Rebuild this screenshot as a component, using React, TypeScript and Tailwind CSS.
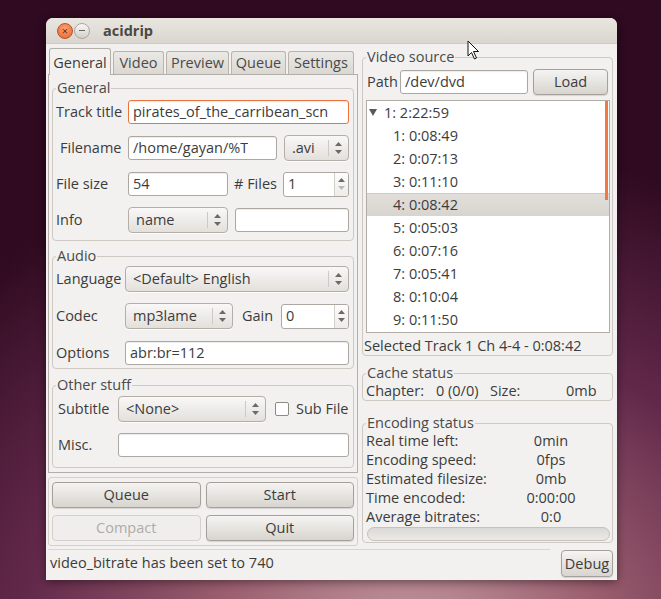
import React from "react";

function Arrows({ dim }: { dim?: boolean }) {
    return (
        <div className="flex flex-col items-center gap-[4px]">
            <svg width="7" height="4" viewBox="0 0 7 4"><path d="M0 4 L3.5 0 L7 4 Z" fill="#6d6a66" /></svg>
            <svg width="7" height="4" viewBox="0 0 7 4"><path d="M0 0 L3.5 4 L7 0 Z" fill={dim ? "#bdbab5" : "#6d6a66"} /></svg>
        </div>
    );
}

function Entry({ value, focused, className }: { value?: string; focused?: boolean; className?: string }) {
    return (
        <div
            className={`h-[24px] flex items-center pl-[4px] bg-white rounded-[3px] border shadow-[inset_0_1px_1px_rgba(0,0,0,0.08)] ${
                focused ? "border-[#e9743f]" : "border-[#aca8a1]"
            } ${className ?? ""}`}
        >
            <span className="whitespace-nowrap overflow-hidden">{value}</span>
        </div>
    );
}

function Combo({ value, className }: { value: string; className?: string }) {
    return (
        <div className={`h-[26px] flex items-center rounded-[4px] border border-[#b3afa8] bg-gradient-to-b from-[#f9f8f7] to-[#e3e0dc] shadow-[0_1px_0_rgba(255,255,255,0.8)] ${className ?? ""}`}>
            <span className="flex-1 pl-[7px] whitespace-nowrap overflow-hidden">{value}</span>
            <div className="w-px h-[16px] bg-[#cdc9c3]" />
            <div className="w-[19px] flex justify-center">
                <Arrows />
            </div>
        </div>
    );
}

function Spin({ value, dimDown, className }: { value: string; dimDown?: boolean; className?: string }) {
    return (
        <div className={`h-[25px] flex bg-white rounded-[3px] border border-[#aca8a1] overflow-hidden ${className ?? ""}`}>
            <span className="flex-1 flex items-center pl-[4px]">{value}</span>
            <div className="w-[14px] border-l border-[#d3d0cb] bg-gradient-to-b from-[#fdfdfc] to-[#eeece9] flex items-center justify-center">
                <Arrows dim={dimDown} />
            </div>
        </div>
    );
}

function Btn({ label, disabled, className }: { label: string; disabled?: boolean; className?: string }) {
    return (
        <div
            className={`h-[26px] flex items-center justify-center rounded-[4px] border ${
                disabled
                    ? "border-[#d4d1cc] bg-[#efeeec] text-[#aeaba7]"
                    : "border-[#a5a19a] bg-gradient-to-b from-[#f5f4f2] to-[#d8d5cf] shadow-[0_1px_1px_rgba(0,0,0,0.12)]"
            } ${className ?? ""}`}
        >
            {label}
        </div>
    );
}

function Frame({ title, className, children }: { title: string; className?: string; children: React.ReactNode }) {
    return (
        <fieldset className={`border border-[#cdc9c2] rounded-[4px] ${className ?? ""}`}>
            <legend className="ml-[3px] px-[1px] leading-[16px] text-[#4a4a4a]">{title}</legend>
            {children}
        </fieldset>
    );
}

const tabs = [
    { name: "General", w: "w-[62px]" },
    { name: "Video", w: "w-[51px]" },
    { name: "Preview", w: "w-[63px]" },
    { name: "Queue", w: "w-[55px]" },
    { name: "Settings", w: "w-[66px]" },
];

const chapters = ["0:08:49", "0:07:13", "0:11:10", "0:08:42", "0:05:03", "0:07:16", "0:05:41", "0:10:04", "0:11:50"];

const encoding = [
    ["Real time left:", "0min"],
    ["Encoding speed:", "0fps"],
    ["Estimated filesize:", "0mb"],
    ["Time encoded:", "0:00:00"],
    ["Average bitrates:", "0:0"],
];

export default function App() {
    return (
        <div className="relative w-[661px] h-[599px] overflow-hidden pt-[18px] pl-[46px] bg-[radial-gradient(ellipse_95%_85%_at_62%_108%,#c59ca3_0%,#9c6070_30%,#62284a_62%,#2f0a20_100%)] font-['Open_Sans','Noto_Sans',sans-serif] text-[14.5px] text-[#3c3c3c]">
            <div className="w-[571px] h-[562px] rounded-t-[7px] bg-[#f2f1f0] shadow-[0_2px_10px_rgba(0,0,0,0.45)] flex flex-col">
                {/* title bar */}
                <div className="h-[26px] shrink-0 flex items-center pl-[11px] rounded-t-[7px] bg-gradient-to-b from-[#e9e6e0] to-[#dad6cf] border-b border-[#cfcac2]">
                    <div className="w-[16px] h-[16px] rounded-full border border-[#b8532a] bg-[radial-gradient(circle_at_50%_35%,#fba273,#e9622b)] flex items-center justify-center text-[11px] leading-none text-[#6e2a10]">
                        ×
                    </div>
                    <div className="ml-[1px] w-[16px] h-[16px] rounded-full border border-[#aaa69f] bg-gradient-to-b from-[#f8f7f5] to-[#d3d0ca] flex items-center justify-center">
                        <div className="w-[6px] h-px bg-[#6a6763]" />
                    </div>
                    <span className="ml-[13px] font-bold text-[#4b4945]">acidrip</span>
                </div>

                {/* body */}
                <div className="h-[503px] shrink-0 flex pl-[2px] gap-[4px]">
                    {/* left column */}
                    <div className="w-[310px] flex flex-col pt-[4px]">
                        <div className="h-[27px] -mb-px relative z-10 flex items-end gap-[2px] pl-[1px]">
                            {tabs.map((t, i) =>
                                i === 0 ? (
                                    <div key={t.name} className={`${t.w} h-[27px] flex items-center justify-center pt-[2px] rounded-t-[3px] border border-b-0 border-[#b3afa8] bg-[#f2f1f0]`}>
                                        {t.name}
                                    </div>
                                ) : (
                                    <div key={t.name} className={`${t.w} h-[23px] mb-px flex items-center justify-center rounded-t-[3px] border border-b-0 border-[#b8b4ad] bg-gradient-to-b from-[#ebe9e5] to-[#dbd8d2] text-[#4a4a4a]`}>
                                        {t.name}
                                    </div>
                                )
                            )}
                        </div>
                        <div className="h-[399px] border border-[#b3afa8] px-[3px] pt-[5px] flex flex-col">
                            <Frame title="General" className="pb-[8px]">
                                <div className="mt-[4px] flex flex-col gap-[12px] pr-[4px]">
                                    <div className="flex items-center h-[24px]">
                                        <span className="w-[75px] pl-[3px] whitespace-nowrap">Track title</span>
                                        <Entry value="pirates_of_the_carribean_scn" focused className="flex-1" />
                                    </div>
                                    <div className="flex items-center h-[24px]">
                                        <span className="w-[75px] pl-[7px]">Filename</span>
                                        <Entry value="/home/gayan/%T" className="w-[149px]" />
                                        <Combo value=".avi" className="ml-[7px] flex-1" />
                                    </div>
                                    <div className="flex items-center h-[24px]">
                                        <span className="w-[75px] pl-[3px]">File size</span>
                                        <Entry value="54" className="w-[100px]" />
                                        <span className="ml-[6px] w-[49px] whitespace-nowrap"># Files</span>
                                        <Spin value="1" dimDown className="flex-1" />
                                    </div>
                                    <div className="flex items-center h-[24px]">
                                        <span className="w-[75px] pl-[3px]">Info</span>
                                        <Combo value="name" className="w-[100px]" />
                                        <Entry className="ml-[7px] flex-1" />
                                    </div>
                                </div>
                            </Frame>

                            <Frame title="Audio" className="mt-[7px] pb-[2px]">
                                <div className="mt-[2px] flex flex-col gap-[11px] pr-[4px]">
                                    <div className="flex items-center h-[26px]">
                                        <span className="w-[72px] pl-[3px]">Language</span>
                                        <Combo value="<Default> English" className="flex-1" />
                                    </div>
                                    <div className="flex items-center h-[26px]">
                                        <span className="w-[72px] pl-[3px]">Codec</span>
                                        <Combo value="mp3lame" className="w-[108px]" />
                                        <span className="ml-[9px] w-[39px]">Gain</span>
                                        <Spin value="0" className="flex-1" />
                                    </div>
                                    <div className="flex items-center h-[26px]">
                                        <span className="w-[72px] pl-[3px]">Options</span>
                                        <Entry value="abr:br=112" className="flex-1" />
                                    </div>
                                </div>
                            </Frame>

                            <Frame title="Other stuff" className="mt-[8px] flex-1 mb-[4px]">
                                <div className="mt-[3px] flex flex-col gap-[10px] pr-[4px]">
                                    <div className="flex items-center h-[26px]">
                                        <span className="w-[65px] pl-[5px]">Subtitle</span>
                                        <Combo value="<None>" className="w-[148px]" />
                                        <div className="ml-[9px] w-[14px] h-[14px] rounded-[2px] border border-[#8e8a84] bg-white" />
                                        <span className="ml-[7px] whitespace-nowrap">Sub File</span>
                                    </div>
                                    <div className="flex items-center h-[25px]">
                                        <span className="w-[65px] pl-[5px]">Misc.</span>
                                        <Entry className="flex-1" />
                                    </div>
                                </div>
                            </Frame>
                        </div>

                        <div className="mt-[4px] border border-[#d3cfc9] rounded-[3px] px-[3px] py-[4px] grid grid-cols-2 gap-x-[5px] gap-y-[7px]">
                            <Btn label="Queue" />
                            <Btn label="Start" />
                            <Btn label="Compact" disabled />
                            <Btn label="Quit" />
                        </div>
                    </div>

                    {/* right column */}
                    <div className="w-[251px] flex flex-col pt-[5px]">
                        <Frame title="Video source">
                            <div className="mt-[4px] flex items-center h-[25px] pr-[4px]">
                                <span className="w-[37px] pl-[4px]">Path</span>
                                <Entry value="/dev/dvd" className="w-[128px]" />
                                <Btn label="Load" className="ml-[5px] flex-1" />
                            </div>
                            <div className="mt-[6px] ml-[3px] mr-[2px] h-[233px] border border-[#b1ada6] bg-white relative overflow-hidden">
                                <div className="h-[23px] flex items-center pl-[2px]">
                                    <svg width="8" height="7" viewBox="0 0 8 7"><path d="M0 0 L8 0 L4 7 Z" fill="#5c5a57" /></svg>
                                    <span className="ml-[7px]">1: 2:22:59</span>
                                </div>
                                {chapters.map((c, i) => (
                                    <div
                                        key={c + i}
                                        className={`h-[23px] flex items-center pl-[26px] ${
                                            i === 3 ? "bg-gradient-to-b from-[#e2dfdb] to-[#d8d5d0] border-t border-[#cfcbc5]" : ""
                                        }`}
                                    >
                                        {i + 1}: {c}
                                    </div>
                                ))}
                                <div className="absolute right-[1px] top-0 w-[3px] h-[99px] bg-[#ef7a43]" />
                            </div>
                            <div className="mt-[4px] leading-[18px] pl-[1px] whitespace-nowrap">Selected Track 1 Ch 4-4 - 0:08:42</div>
                        </Frame>

                        <Frame title="Cache status" className="mt-[9px]">
                            <div className="mt-[1px] flex leading-[18px] pl-[3px] whitespace-nowrap">
                                <span className="w-[70px]">Chapter:</span>
                                <span className="w-[54px]">0 (0/0)</span>
                                <span className="w-[76px]">Size:</span>
                                <span>0mb</span>
                            </div>
                        </Frame>

                        <Frame title="Encoding status" className="mt-[14px] pb-[1px]">
                            <div className="pl-[3px] leading-[19px]">
                                {encoding.map(([k, v]) => (
                                    <div key={k} className="flex whitespace-nowrap">
                                        <span className="w-[150px]">{k}</span>
                                        <span className="w-[70px] text-center">{v}</span>
                                    </div>
                                ))}
                            </div>
                            <div className="mt-[1px] ml-[4px] mr-[2px] h-[14px] rounded-full border border-[#c5c2bc] bg-gradient-to-b from-[#dbd9d5] to-[#eceae7]" />
                        </Frame>
                    </div>
                </div>

                {/* status bar */}
                <div className="flex-1 flex pl-[2px] pr-[4px]">
                    <div className="flex-1 mt-[2px] border-t border-[#d9d6d0] pt-[4px] pl-[2px] leading-[18px] whitespace-nowrap">
                        video_bitrate has been set to 740
                    </div>
                    <Btn label="Debug" className="ml-[11px] mt-[3px] w-[52px] h-[27px]" />
                </div>
            </div>

            {/* mouse pointer */}
            <svg className="absolute left-[467px] top-[40px]" width="13" height="21" viewBox="0 0 13 21">
                <path d="M1 1 L1 16 L4.5 12.5 L7.5 19 L9.5 18 L6.5 11.5 L11.5 11.5 Z" fill="#ffffff" stroke="#111111" strokeWidth="1" strokeLinejoin="round" />
            </svg>
        </div>
    );
}
